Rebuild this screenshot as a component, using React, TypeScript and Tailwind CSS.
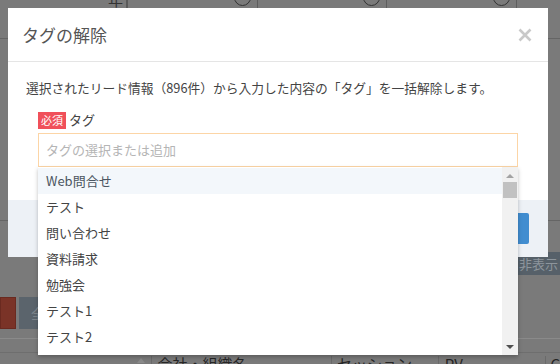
import React from "react";

const tags = ["Web問合せ", "テスト", "問い合わせ", "資料請求", "勉強会", "テスト1", "テスト2"];

function CloseIcon() {
  return (
    <svg width="14" height="14" viewBox="0 0 14 14" className="block">
      <path d="M1.5 1.5 L12.5 12.5 M12.5 1.5 L1.5 12.5" stroke="#c9c9c9" strokeWidth="2.6" strokeLinecap="butt" />
    </svg>
  );
}

function SortArrow() {
  return <span className="inline-block w-0 h-0 border-l-[4px] border-r-[4px] border-b-[5px] border-l-transparent border-r-transparent border-b-[#8a8a8a]" />;
}

function Backdrop() {
  return (
    <div className="flex flex-col text-[#2e2e2e]">
      {/* top row of the table, mostly hidden */}
      <div className="flex h-[8px] overflow-hidden items-end">
        <div className="w-[128px] h-full border-r-2 border-[#5a5a5a] flex items-end justify-end pr-[3px]">
          <span className="text-[15px] leading-none mb-[1px] text-[#333]">年</span>
        </div>
        {[130, 129, 130].map((w, i) => (
          <div key={i} style={{ width: w }} className="h-full border-r border-[#5e5e5e] flex items-end justify-end pr-[6px]">
            <span className="w-[17px] h-[17px] rounded-full border-[1.5px] border-[#333] mb-[2px] shrink-0" />
          </div>
        ))}
      </div>
      <div className="h-[31px] border-b border-[#656565]" />
      <div className="h-[182px] border-b border-[#656565]" />
      <div className="h-[31px]" />
      <div className="h-[23px] flex justify-end">
        <div className="w-[200px] bg-[#566069] flex items-center justify-end pr-[2px] text-[13px] text-[#8d959c]">
          すべて非表示
        </div>
      </div>
      <div className="h-[22px]" />
      <div className="h-[32px] flex gap-[3px]">
        <div className="w-[16px] bg-[#7a3327] border border-[#6a2a20]" />
        <div className="w-[80px] bg-[#5b646c] text-[#7e868c] text-[14px] flex items-center pl-[12px]">全</div>
      </div>
      <div className="h-[10px] border-b border-[#8a8a8a]" />
      <div className="h-[14px] border-b border-[#6e6e6e]" />
      <div className="flex text-[15px] leading-none text-[#262626] pt-[3px]">
        <div className="w-[152px] border-r border-[#6a6a6a] flex justify-end items-start pr-[6px] pt-[2px]"><SortArrow /></div>
        <div className="w-[181px] border-r border-[#6a6a6a] flex justify-between pl-[6px] pr-[6px]">
          <span>会社・組織名</span>
          <span className="pt-[2px]"><SortArrow /></span>
        </div>
        <div className="w-[107px] border-r border-[#6a6a6a] pl-[5px]">セッション</div>
        <div className="w-[108px] border-r border-[#6a6a6a] pl-[6px]">PV</div>
        <div className="pl-[4px]">C</div>
      </div>
    </div>
  );
}

function TagDropdown() {
  return (
    <div className="absolute left-0 right-0 top-full z-10 bg-white shadow-[0_2px_4px_rgba(0,0,0,0.25)] flex h-[188px]">
      <ul className="flex-1 pt-[1px]">
        {tags.map((t, i) => (
          <li
            key={t}
            className={
              "h-[26px] flex items-center px-[8px] text-[13px] " +
              (i === 0 ? "bg-[#f3f7fb] text-[#4b5561]" : "text-[#444]")
            }
          >
            {t}
          </li>
        ))}
      </ul>
      <div className="w-[16px] bg-[#f1f1f1] flex flex-col items-center">
        <span className="mt-[7px] w-0 h-0 border-l-[4px] border-r-[4px] border-b-[4px] border-l-transparent border-r-transparent border-b-[#a3a3a3]" />
        <span className="mt-[4px] w-[14px] h-[16px] bg-[#c1c1c1]" />
        <span className="mt-auto mb-[6px] w-0 h-0 border-l-[4px] border-r-[4px] border-t-[4px] border-l-transparent border-r-transparent border-t-[#505050]" />
      </div>
    </div>
  );
}

export default function App() {
  return (
    <div className="relative w-[560px] h-[364px] overflow-hidden bg-[#7a7a7a] font-['Noto_Sans_CJK_JP',sans-serif]">
      <Backdrop />

      <div className="absolute left-[8px] top-[8px] w-[540px] h-[249px] bg-white flex flex-col">
        <div className="h-[54px] border-b border-[#e5e5e5] flex items-center justify-between pl-[14px] pr-[16px]">
          <h2 className="text-[17px] text-[#555] leading-none">タグの解除</h2>
          <CloseIcon />
        </div>

        <div className="flex-1 px-[18px] pt-[17px]">
          <p className="text-[12.75px] leading-[18px] text-[#444] whitespace-nowrap">
            選択されたリード情報（896件）から入力した内容の「タグ」を一括解除します。
          </p>
          <div className="mx-[12px] mt-[14px]">
            <div className="flex items-center gap-[3px] h-[18px]">
              <span className="bg-[#f0505a] text-white text-[11px] leading-none px-[3px] h-[17px] flex items-center">必須</span>
              <span className="text-[13px] text-[#444]">タグ</span>
            </div>
            <div className="relative mt-[4px]">
              <div className="h-[34px] border border-[#fcd5a6] flex items-center px-[7px] text-[13px] text-[#b5b5b5]">
                タグの選択または追加
              </div>
              <TagDropdown />
            </div>
          </div>
        </div>

        <div className="h-[57px] bg-[#edf1f6] flex items-center justify-end pr-[19px]">
          <div className="w-[90px] h-[31px] bg-[#418dd0] rounded-[2px]" />
        </div>
      </div>
    </div>
  );
}
